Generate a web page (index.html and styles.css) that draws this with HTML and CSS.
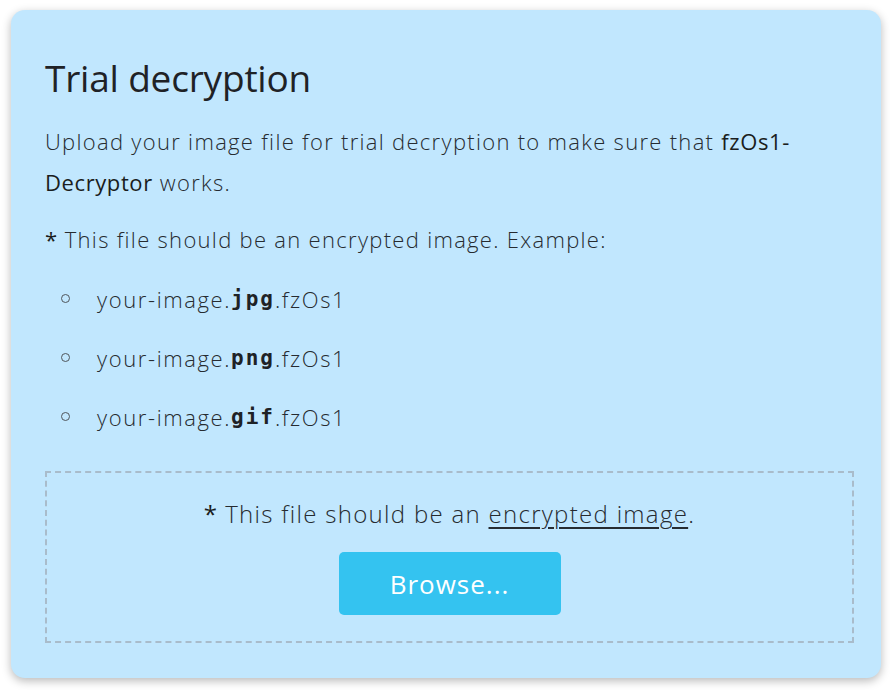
FILE: index.html
```html
<!DOCTYPE html>
<html lang="en">
<head>
<meta charset="utf-8">
<title>Trial decryption</title>
<link rel="stylesheet" href="styles.css">
</head>
<body>
<div class="card">
  <h1 class="title">Trial decryption</h1>
  <p class="lead">Upload your image file for trial decryption to make sure that <strong>fzOs1-</strong><strong>Decryptor</strong> works.</p>
  <p class="note"><strong>*</strong> This file should be an encrypted image. Example:</p>
  <ul class="examples">
    <li>your-image.<code>jpg</code>.fzOs1</li>
    <li>your-image.<code>png</code>.fzOs1</li>
    <li>your-image.<code>gif</code>.fzOs1</li>
  </ul>
  <div class="dropzone">
    <p class="drop-note"><strong>*</strong> This file should be an <span class="u">encrypted image</span>.</p>
    <button class="browse" type="button">Browse...</button>
  </div>
</div>
</body>
</html>
```
FILE: styles.css
```css
html, body {
  margin: 0;
  padding: 0;
  background: #ffffff;
}
body {
  padding: 10px 9px 12px 11px;
  font-family: "Open Sans", "Lato", sans-serif;
  font-weight: 300;
  color: #262b30;
}
.card {
  background: #c1e7fe;
  border-radius: 14px;
  box-shadow: 0 3px 10px rgba(0,0,0,0.28);
  padding: 46px 27px 35px 34px;
  height: 668px;
  box-sizing: border-box;
}
.title {
  margin: 0 0 21px;
  font-size: 37px;
  font-weight: 400;
  color: #1f2226;
  line-height: 44px;
  letter-spacing: -0.2px;
}
.lead, .note {
  margin: 0 0 16px;
  font-size: 22px;
  line-height: 41px;
  letter-spacing: 1.3px;
}
.note {
  margin-bottom: 10px;
}
.lead strong, .note strong, .drop-note strong {
  font-weight: 500;
  color: #1a1d20;
  letter-spacing: 0.6px;
}
.examples {
  list-style: none;
  margin: 0 0 24px;
  padding: 0 0 0 16px;
  font-size: 22px;
  line-height: 59px;
  letter-spacing: 1.6px;
}
.examples li {
  display: flex;
  align-items: center;
}
.examples li::before {
  content: "";
  width: 7px;
  height: 7px;
  border: 1.5px solid #50565c;
  border-radius: 50%;
  margin-right: 27px;
  flex: none;
  position: relative;
  top: -1px;
}
.examples code {
  font-family: "DejaVu Sans Mono", "Liberation Mono", monospace;
  font-weight: 700;
  font-size: 21px;
  letter-spacing: 2px;
  color: #1e2226;
}
.dropzone {
  border: 2px dashed #a9bccb;
  padding: 24px 0 26px;
  text-align: center;
  display: flex;
  flex-direction: column;
  align-items: center;
  gap: 21px;
}
.drop-note {
  margin: 0;
  font-size: 24px;
  line-height: 34px;
  letter-spacing: 1.3px;
}
.u {
  text-decoration: underline;
  text-decoration-thickness: 1.5px;
  text-underline-offset: 4px;
}
.browse {
  width: 222px;
  height: 63px;
  border: none;
  border-radius: 5px;
  background: #34c3f0;
  color: #ffffff;
  font-family: "Open Sans", "Lato", sans-serif;
  font-weight: 400;
  font-size: 26px;
  letter-spacing: 1px;
}
```
